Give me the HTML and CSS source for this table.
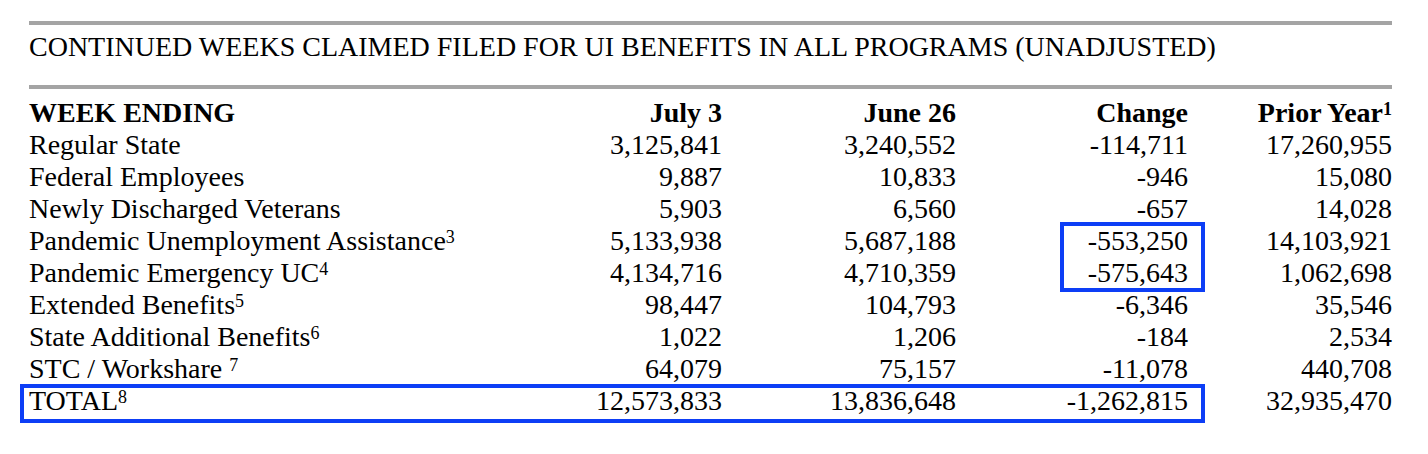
FILE: index.html
```html
<!DOCTYPE html>
<html lang="en">
<head>
<meta charset="utf-8">
<title>Continued Weeks Claimed</title>
<link rel="stylesheet" href="styles.css">
</head>
<body>
<div class="page">
  <div class="rule rule-top"></div>
  <h1 class="title">CONTINUED WEEKS CLAIMED FILED FOR UI BENEFITS IN ALL PROGRAMS (UNADJUSTED)</h1>
  <div class="rule rule-bottom"></div>
  <div class="table-wrap">
    <table class="claims">
      <colgroup>
        <col class="c-label">
        <col class="c-jul">
        <col class="c-jun">
        <col class="c-chg">
        <col class="c-prior">
      </colgroup>
      <thead>
        <tr>
          <th class="label">WEEK ENDING</th>
          <th>July 3</th>
          <th>June 26</th>
          <th>Change</th>
          <th>Prior Year<sup>1</sup></th>
        </tr>
      </thead>
      <tbody>
        <tr><td class="label">Regular State</td><td>3,125,841</td><td>3,240,552</td><td>-114,711</td><td>17,260,955</td></tr>
        <tr><td class="label">Federal Employees</td><td>9,887</td><td>10,833</td><td>-946</td><td>15,080</td></tr>
        <tr><td class="label">Newly Discharged Veterans</td><td>5,903</td><td>6,560</td><td>-657</td><td>14,028</td></tr>
        <tr><td class="label">Pandemic Unemployment Assistance<sup>3</sup></td><td>5,133,938</td><td>5,687,188</td><td>-553,250</td><td>14,103,921</td></tr>
        <tr><td class="label">Pandemic Emergency UC<sup>4</sup></td><td>4,134,716</td><td>4,710,359</td><td>-575,643</td><td>1,062,698</td></tr>
        <tr><td class="label">Extended Benefits<sup>5</sup></td><td>98,447</td><td>104,793</td><td>-6,346</td><td>35,546</td></tr>
        <tr><td class="label">State Additional Benefits<sup>6</sup></td><td>1,022</td><td>1,206</td><td>-184</td><td>2,534</td></tr>
        <tr><td class="label">STC / Workshare <sup>7</sup></td><td>64,079</td><td>75,157</td><td>-11,078</td><td>440,708</td></tr>
        <tr><td class="label">TOTAL<sup>8</sup></td><td>12,573,833</td><td>13,836,648</td><td>-1,262,815</td><td>32,935,470</td></tr>
      </tbody>
    </table>
    <div class="highlight highlight-change"></div>
    <div class="highlight highlight-total"></div>
  </div>
</div>
</body>
</html>
```

FILE: styles.css
```css
html, body {
  margin: 0;
  padding: 0;
  background: #ffffff;
}

body {
  min-height: 454px;
  font-family: "Liberation Serif", "Times New Roman", serif;
  color: #000000;
}

.page {
  width: 1363px;
  padding: 21px 0 40px 29px;
}

.rule {
  height: 4px;
  background: #a4a4a4;
}

.title {
  margin: 5.5px 0 22.5px 0;
  font-size: 28px;
  font-weight: normal;
  line-height: 32px;
  white-space: nowrap;
}

.table-wrap {
  position: relative;
  margin-top: 7.5px;
}

.claims {
  width: 1363px;
  table-layout: fixed;
  border-collapse: collapse;
  border-spacing: 0;
  font-size: 28px;
  line-height: 32px;
}

.c-label { width: 493px; }
.c-jul { width: 200px; }
.c-jun { width: 234px; }
.c-chg { width: 232px; }
.c-prior { width: 204px; }

.claims th,
.claims td {
  padding: 0;
  height: 32px;
  text-align: right;
  white-space: nowrap;
  vertical-align: baseline;
}

.claims th {
  font-weight: bold;
}

.claims .label {
  text-align: left;
}

.claims sup {
  font-size: 18px;
  line-height: 0;
  vertical-align: 7px;
}

.highlight {
  position: absolute;
  box-sizing: border-box;
  border: 4px solid #0d3ef6;
}

.highlight-change {
  left: 1031px;
  top: 125.5px;
  width: 145px;
  height: 70px;
}

.highlight-total {
  left: -9px;
  top: 287.5px;
  width: 1185px;
  height: 39px;
}
```
